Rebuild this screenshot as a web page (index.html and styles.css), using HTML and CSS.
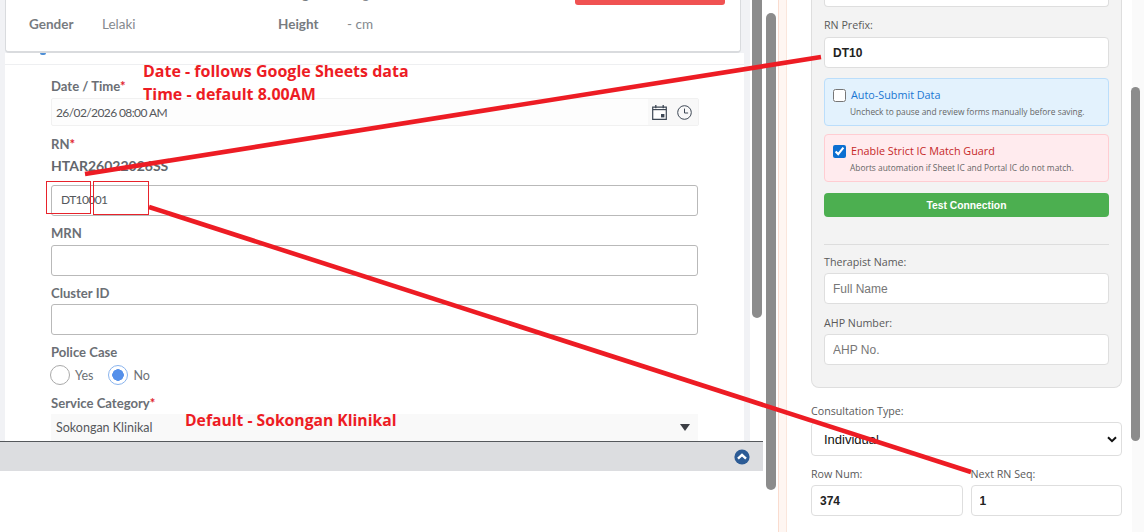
FILE: index.html
```html
<!DOCTYPE html>
<html lang="en">
<head>
<meta charset="utf-8">
<title>Form automation</title>
<link rel="stylesheet" href="styles.css">
</head>
<body>
<div class="page">
  <section class="portal">
    <div class="portal-view">
      <div class="portal-main">
        <div class="patient-card">
          <div class="patient-row row-clipped">
            <span class="p-label">&nbsp;</span><span class="p-value">&nbsp;</span>
            <span class="p-label p-second">Weight</span><span class="p-value">- kg</span>
            <span class="danger-btn"></span>
          </div>
          <div class="patient-row">
            <span class="p-label">Gender</span><span class="p-value">Lelaki</span>
            <span class="p-label p-second">Height</span><span class="p-value">- cm</span>
          </div>
        </div>
        <div class="tab-strip"><span class="tab-mark"></span></div>
        <form class="form-box">
          <label class="f-label f-first">Date / Time<b>*</b></label>
          <div class="date-field">
            <span class="date-text">26/02/2026 08:00 AM</span>
            <span class="date-addon">
              <svg width="15" height="15" viewBox="0 0 15 15"><path d="M.7 2.2h13.6v12.1H.7z" fill="#fff" stroke="#3d4754" stroke-width="1.2"/><path d="M.7 4.6h13.6" stroke="#3d4754" stroke-width="1.2"/><path d="M3.8 0v3.2M11.2 0v3.2" stroke="#3d4754" stroke-width="1.3"/><rect x="9" y="9" width="3.4" height="3.4" fill="#3d4754"/></svg>
              <svg width="15" height="15" viewBox="0 0 15 15"><circle cx="7.5" cy="7.5" r="6.8" fill="none" stroke="#3d4754" stroke-width="1"/><path d="M7.5 3.6v4.4h3.6" fill="none" stroke="#3d4754" stroke-width="1"/></svg>
            </span>
          </div>
          <label class="f-label f-rn">RN<b>*</b></label>
          <div class="rn-value">HTAR26022026SS</div>
          <input class="f-input rn-input" type="text" value="DT10001">
          <label class="f-label f-mrn">MRN</label>
          <input class="f-input" type="text">
          <label class="f-label f-cluster">Cluster ID</label>
          <input class="f-input" type="text">
          <label class="f-label f-police">Police Case</label>
          <div class="radio-row">
            <label class="radio-item"><input type="radio" name="police"><span>Yes</span></label>
            <label class="radio-item"><input type="radio" name="police" checked><span>No</span></label>
          </div>
          <label class="f-label f-service">Service Category<b>*</b></label>
          <div class="service-select">
            <span>Sokongan Klinikal</span>
            <svg width="10" height="7" viewBox="0 0 10 7"><path d="M0 0h10L5 7z" fill="#3c3f45"/></svg>
          </div>
        </form>
      </div>
      <div class="portal-gutter"><div class="thumb thumb-a"></div></div>
    </div>
    <div class="portal-bar">
      <svg width="16" height="16" viewBox="0 0 16 16"><circle cx="8" cy="8" r="7.6" fill="#2c5b95"/><path d="M4 9.6 8 5.8l4 3.8" fill="none" stroke="#fff" stroke-width="2.4"/></svg>
    </div>
  </section>

  <div class="mid-gutter"><div class="thumb thumb-b"></div></div>
  <div class="stripe"></div>

  <aside class="sidebar">
    <div class="settings-box">
      <input class="s-input s-top" type="text">
      <label class="s-label s-prefix">RN Prefix:</label>
      <input class="s-input s-bold" type="text" value="DT10">
      <div class="opt opt-blue">
        <label class="opt-title"><input type="checkbox"><span>Auto-Submit Data</span></label>
        <p class="opt-note">Uncheck to pause and review forms manually before saving.</p>
      </div>
      <div class="opt opt-red">
        <label class="opt-title"><input type="checkbox" checked><span>Enable Strict IC Match Guard</span></label>
        <p class="opt-note">Aborts automation if Sheet IC and Portal IC do not match.</p>
      </div>
      <button class="test-btn" type="button">Test Connection</button>
      <hr class="divider">
      <label class="s-label s-therapist">Therapist Name:</label>
      <input class="s-input" type="text" placeholder="Full Name">
      <label class="s-label s-ahp">AHP Number:</label>
      <input class="s-input" type="text" placeholder="AHP No.">
    </div>
    <label class="s-label s-consult">Consultation Type:</label>
    <div class="consult-select">
      <span>Individual</span>
      <svg width="10" height="7" viewBox="0 0 10 7"><path d="M1 1.2 5 5.2l4-4" fill="none" stroke="#111" stroke-width="2"/></svg>
    </div>
    <div class="pair">
      <div class="pair-col">
        <label class="s-label">Row Num:</label>
        <input class="s-input s-num" type="text" value="374">
      </div>
      <div class="pair-col">
        <label class="s-label">Next RN Seq:</label>
        <input class="s-input s-num" type="text" value="1">
      </div>
    </div>
  </aside>
  <div class="side-gutter"><div class="thumb thumb-c"></div></div>
</div>

<div class="note note-date">Date - follows Google Sheets data<br>Time - default 8.00AM</div>
<div class="note note-service">Default - Sokongan Klinikal</div>
<div class="mark mark-a"></div>
<div class="mark mark-b"></div>
<svg class="arrows" width="1144" height="532" viewBox="0 0 1144 532">
  <path d="M85 174 821 57" stroke="#ed1c24" stroke-width="4.6" fill="none"/>
  <path d="M149 207 971 472" stroke="#ed1c24" stroke-width="4.6" fill="none"/>
</svg>
</body>
</html>
```
FILE: styles.css
```css
* { box-sizing: border-box; }
html, body { margin: 0; padding: 0; width: 1144px; height: 532px; overflow: hidden; background: #fff; }
body { position: relative; font-family: "Lato", sans-serif; }

.page { display: flex; width: 1144px; height: 532px; overflow: hidden; }

/* Left portal */
.portal { width: 763px; height: 532px; flex: none; display: flex; flex-direction: column; }
.portal-view { display: flex; height: 441px; flex: none; overflow: hidden; }
.portal-main { width: 744px; flex: none; background: #f1f2f5; padding-left: 5px; overflow: hidden; }
.portal-gutter { flex: 1; background: #fff; position: relative; border-left: 6px solid #f1f2f5; padding-left: 2px; }
.thumb { width: 10px; background: #8c8c8c; }
.thumb-a { height: 318px; border-radius: 0 0 5px 5px; }
.portal-bar { height: 30px; flex: none; background: #dcdde0; border-top: 1.5px solid #55585c; display: flex; justify-content: flex-end; align-items: center; padding-right: 13px; }

.patient-card { display: flex; flex-direction: column; height: 53px; width: 736px; background: #fff; border: 1px solid #d9dbde; border-top: 0; border-radius: 0 0 4px 4px; border-bottom-width: 2px; padding-left: 23px; position: relative; }
.patient-row { display: flex; align-items: center; height: 28px; flex: none; font-size: 13.5px; }
.row-clipped { margin-top: -20px; margin-bottom: 2px; }
.p-label { width: 73px; font-weight: 700; color: #777b80; }
.p-value { width: 176px; color: #85898e; }
.p-second { width: 69px; }
.danger-btn { position: absolute; left: 569px; top: 0; width: 150px; height: 5px; background: #f05252; border-radius: 0 0 3px 3px; }

.tab-strip { height: 12px; width: 739px; background: #fff; border-bottom: 1px solid #eeeff1; position: relative; }
.tab-mark { display: block; width: 6px; height: 2px; margin-left: 35px; background: #4f8fd6; border-radius: 0 0 3px 3px; }

.form-box { display: flow-root; width: 739px; height: 376px; background: #fff; padding-left: 46px; padding-right: 45px; overflow: hidden; }
.f-label { display: block; font-size: 13.1px; line-height: 18px; font-weight: 700; color: #6b6f75; }
.f-label b { color: #e0242f; font-weight: 700; }
.f-first { margin-top: 12px; }
.date-field { display: flex; justify-content: space-between; height: 28px; margin-top: 3px; background: #fdfdfd; border: 1px solid #f1f1f1; border-radius: 2px; font-size: 12px; letter-spacing: -0.6px; color: #55585c; align-items: stretch; }
.date-text { align-self: center; padding-left: 4px; }
.date-addon { width: 50px; background: #f8f8f8; display: flex; align-items: center; gap: 10px; padding-left: 4px; }
.f-rn { margin-top: 9px; }
.rn-value { font-size: 14px; line-height: 20px; margin-top: 3px; font-weight: 700; color: #62666c; }
.f-input { display: block; width: 647px; height: 31px; background: #fff; border: 1.5px solid #b9b9b9; border-radius: 3px; font-family: inherit; font-size: 12px; letter-spacing: -0.6px; color: #55585c; padding: 0 9px 2px; outline: none; }
.rn-input { margin-top: 9px; }
.f-mrn { margin-top: 8px; }
.f-label + .f-input { margin-top: 3px; }
.f-cluster { margin-top: 8px; }
.f-label.f-cluster + .f-input { margin-top: 2px; }
.f-police { margin-top: 8px; }
.radio-row { display: flex; gap: 16px; margin-top: 3px; height: 24px; }
.radio-item { display: flex; align-items: flex-start; gap: 5px; font-size: 12.5px; color: #6b6f75; line-height: 24px; }
.radio-item input { appearance: none; width: 20px; height: 20px; margin: 1px 0 0 -1px; border: 1.5px solid #a9a9a9; border-radius: 50%; background: #fff; }
.radio-item input:checked { border-color: #8ab4ee; background: radial-gradient(circle, #5590ea 0 5.5px, #fff 6px); }
.f-service { margin-top: 6px; }
.service-select { display: flex; justify-content: space-between; align-items: center; width: 647px; height: 27px; margin-top: 2px; background: #f9f9f9; font-size: 12.5px; color: #55585c; padding: 0 8px 0 5px; }

/* Middle gutter */
.mid-gutter { width: 15px; flex: none; background: #fff; padding: 13px 0 0 3px; }
.thumb-b { height: 477px; border-radius: 5px; }
.stripe { width: 9px; flex: none; background: #fef6f2; border-left: 1px solid #fadccf; border-right: 1px solid #fae6dc; }

/* Sidebar */
.sidebar { width: 345px; flex: none; background: #fff; padding: 0 8px 0 24px; font-family: "Liberation Sans", sans-serif; overflow: hidden; }
.settings-box { display: flow-root; width: 311px; height: 388px; background: #f3f3f3; border: 1px solid #dedede; border-top: 0; border-radius: 0 0 8px 8px; padding: 0 12px; }
.s-label { display: block; font-family: "Open Sans", sans-serif; font-size: 10.7px; line-height: 15px; color: #5a5a5a; }
.s-input { display: block; width: 100%; height: 31px; background: #fff; border: 1.5px solid #dedede; border-radius: 4px; padding: 0 8px; font-family: "Liberation Sans", sans-serif; font-size: 12px; color: #222; outline: none; }
.s-input::placeholder { color: #777; }
.s-top { height: 8px; margin-top: -1px; border-top: 0; border-radius: 0 0 4px 4px; }
.s-prefix { margin-top: 11px; }
.s-label + .s-input { margin-top: 4px; }
.s-bold { font-weight: 700; }
.opt { border-radius: 4px; padding: 8px 8px 0; margin-top: 10px; height: 48px; }
.opt-blue { background: #e3f2fd; border: 1px solid #bbdefb; }
.opt-red { background: #ffebee; border: 1px solid #ffcdd2; margin-top: 8px; }
.opt-title { display: flex; align-items: center; gap: 5px; font-family: "Open Sans", sans-serif; font-size: 10.8px; line-height: 16px; }
.opt-title input { width: 13px; height: 13px; margin: 0; accent-color: #0b6fd1; }
.opt-blue .opt-title { color: #1976d2; }
.opt-red .opt-title { color: #c62828; }
.opt-note { margin: 2px 0 0; padding-left: 17px; font-family: "Open Sans", sans-serif; font-size: 8.4px; line-height: 13px; color: #666; white-space: nowrap; }
.test-btn { display: block; width: 100%; height: 24px; margin-top: 11px; background: #4caf50; border: 0; border-radius: 4px; color: #fff; font-family: "Liberation Sans", sans-serif; font-size: 10.3px; font-weight: 700; padding: 0; }
.divider { border: 0; border-top: 1px solid #dddddd; margin: 27px 0 0; }
.s-therapist { margin-top: 10px; }
.s-label.s-therapist + .s-input { margin-top: 3px; }
.s-ahp { margin-top: 12px; }
.s-label.s-ahp + .s-input { margin-top: 3px; }
.s-consult { margin-top: 16px; }
.consult-select { display: flex; justify-content: space-between; align-items: center; width: 311px; height: 34px; margin-top: 3px; background: #fff; border: 1.5px solid #dedede; border-radius: 4px; padding: 0 4px 0 12px; font-size: 13px; color: #111; }
.pair { display: flex; gap: 8px; width: 311px; margin-top: 11px; }
.pair-col { flex: 1; min-width: 0; }
.pair .s-label + .s-input { margin-top: 3px; }
.s-num { padding: 0 8px; font-weight: 700; }

.side-gutter { flex: 1; background: #fafafa; position: relative; }
.thumb-c { width: 9px; height: 354px; margin: 87px 0 0 -1px; border-radius: 5px; }

/* Annotations laid over the screenshot */
.note { position: absolute; color: #ed1c24; font-family: "Open Sans", sans-serif; font-weight: 700; font-size: 16px; line-height: 23px; white-space: nowrap; }
.note-date { left: 143px; top: 60px; }
.note-service { left: 185px; top: 409px; font-size: 15.7px; }
.mark { position: absolute; border: 1px solid #e8232b; }
.mark-a { left: 46px; top: 181px; width: 45px; height: 33px; }
.mark-b { left: 93px; top: 181px; width: 56px; height: 34px; }
.arrows { position: absolute; left: 0; top: 0; pointer-events: none; }
```
